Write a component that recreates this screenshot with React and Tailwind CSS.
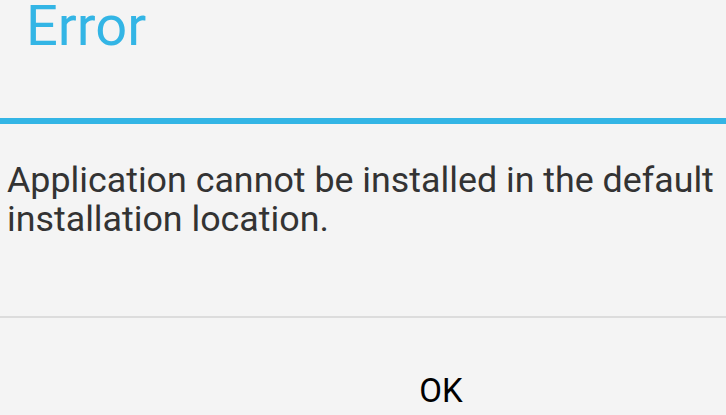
import React from 'react';

// Holo-style error dialog, cropped on the right like the reference
export default function App() {
  return (
    <div
      className="w-[726px] h-[415px] overflow-hidden bg-[#f4f4f4]"
      style={{ fontFamily: 'Roboto, "Noto Sans", sans-serif' }}
    >
      <div className="pl-[26px] pt-[3px] h-[50px] text-[56px] leading-[47px] text-[#33b5e5]">Error</div>
      <div className="mt-[68px] h-[6px] w-full bg-[#33b5e5]" />

      <p className="pt-[37px] pl-[7px] text-[35.8px] leading-[38.5px] text-[#333333] whitespace-nowrap">
        Application cannot be installed in the default
        <br />
        installation location.
      </p>

      <div className="mt-[78px] h-[2px] w-full bg-[#dcdcdc]" />

      <button className="w-[882px] flex justify-center pt-[53px] text-[33px] leading-[40px] text-black">
        OK
      </button>
    </div>
  );
}
